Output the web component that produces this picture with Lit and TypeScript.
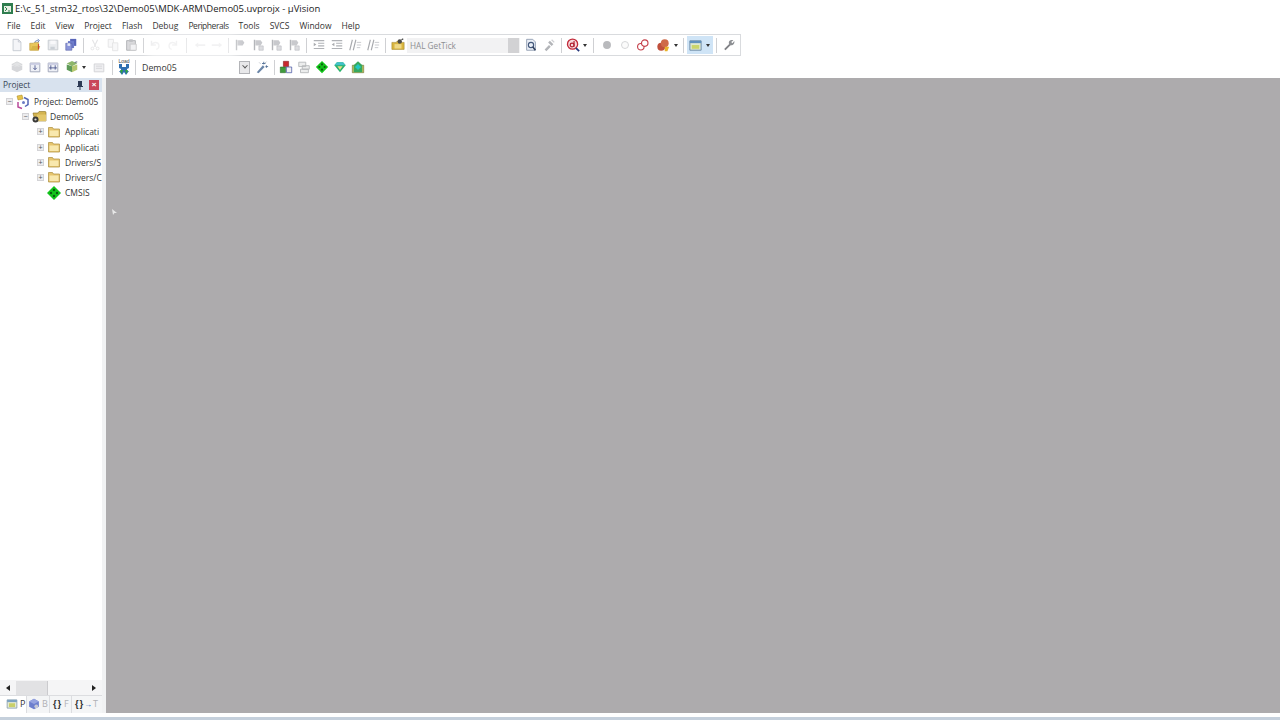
import { LitElement, html, css, svg, TemplateResult } from "lit";
import { customElement } from "lit/decorators.js";

const s = (body: TemplateResult, cls = "") =>
  html`<svg class="ic ${cls}" width="16" height="16" viewBox="0 0 16 16">${body}</svg>`;

const G = "#c9c9cc";
const GD = "#aeb0b4";
const icons: Record<string, TemplateResult> = {
  newf: s(svg`<path d="M3.500 1.500h6l3 3v10h-9z" fill="#f4f5f8" stroke="#c4c8d0"/><path d="M9.500 1.500v3h3" fill="none" stroke="#c4c8d0"/>`),
  open: s(svg`<path d="M2 6h4l1-1h5v9H2z" fill="#e8c65a" stroke="#bd9a3a" stroke-width=".7"/><path d="M3 14l2-5h9l-2 5z" fill="#d8b548"/><path d="M11 1l2 2-2 2M8 5c0-2 2-2 4-2" fill="none" stroke="#5a78b8"/><path d="M12 7v6" stroke="#c9492f" stroke-width="1.4"/>`),
  save: s(svg`<path d="M2.500 2.500h11v11h-11z" fill="#e9ebee" stroke="#c5c9ce"/><path d="M5 3h6v4H5z" fill="#f8f8fa"/><path d="M5 10h5v3H5z" fill="#cbd0d6"/>`),
  saveall: s(svg`<path d="M7 1h7v8H7z" fill="#5865b8"/><path d="M4.500 3.500h7v8h-7z" fill="#6f7dcb"/><path d="M2 6h7v8H2z" fill="#8b96da" stroke="#4c579f" stroke-width=".6"/><path d="M4 6h3v3H4z" fill="#e6e8f6"/>`),
  cut: s(svg`<path d="M5 2l4 8M11 2l-4 8" stroke="${G}" stroke-width="1.2"/><circle cx="5" cy="12" r="1.6" fill="none" stroke="${G}"/><circle cx="11" cy="12" r="1.6" fill="none" stroke="${G}"/>`),
  copy: s(svg`<path d="M2.500 1.500h6v9h-6z" fill="#f2f2f4" stroke="${G}"/><path d="M7.500 5.500h6v9h-6z" fill="#f2f2f4" stroke="${G}"/>`),
  paste: s(svg`<path d="M3 3h10v11H3z" fill="#d9d9dc" stroke="${GD}"/><path d="M6 1.500h4v3H6z" fill="#bfc0c4"/><path d="M7 7h7v7H7z" fill="#f1f1f3" stroke="${G}"/>`),
  undo: s(svg`<path d="M4 3v5h5M4.500 8C6 4 12 4 12.500 8.500c.2 2-1 4-3 4.500" fill="none" stroke="${G}" stroke-width="1.6"/>`),
  redo: s(svg`<path d="M12 3v5H7M11.500 8C10 4 4 4 3.500 8.500c-.2 2 1 4 3 4.500" fill="none" stroke="${G}" stroke-width="1.6"/>`),
  back: s(svg`<path d="M2 8l4-3v2h8v2H6v2z" fill="${G}"/>`),
  fwd: s(svg`<path d="M14 8l-4-3v2H2v2h8v2z" fill="${G}"/>`),
  flag: s(svg`<path d="M4 2v12" stroke="#b4b6ba" stroke-width="1.6"/><path d="M5 2.500h6l2 3-2 3H5z" fill="#c8c9cd"/>`),
  flagb: s(svg`<path d="M4 2v12" stroke="#b4b6ba" stroke-width="1.6"/><path d="M5 2.500h6l2 3-2 3H5z" fill="#c8c9cd"/><path d="M9 9h5v5H9z" fill="#dcdde0" stroke="#b5b6ba" stroke-width=".6"/>`),
  indent: s(svg`<path d="M2 3h12M7 6h7M7 9h7M2 12h12" stroke="#b0b2b6" stroke-width="1.200"/><path d="M2 5.500l3 2-3 2z" fill="#a8aaae"/>`),
  outdent: s(svg`<path d="M2 3h12M7 6h7M7 9h7M2 12h12" stroke="#b0b2b6" stroke-width="1.200"/><path d="M5 5.500l-3 2 3 2z" fill="#a8aaae"/>`),
  cmt: s(svg`<path d="M5 2L2 14M9 2L6 14" stroke="#a8aaae" stroke-width="1.300"/><path d="M10 5h5M10 8h5M10 11h4" stroke="#c2c4c8"/>`),
  find: s(svg`<path d="M1 5h5l1-1.500h4l1 1.500h3v8H1z" fill="#d9b53f" stroke="#9c7f26" stroke-width=".6"/><path d="M4 7h8v5H4z" fill="#efd987"/><circle cx="10" cy="4" r="2.500" fill="#4a4a48"/><path d="M12 2l2-1" stroke="#444" stroke-width="1.300"/>`),
  doc: s(svg`<path d="M3 1.500h7l3 3V14H3z" fill="#e9eef6" stroke="#8f9bb0"/><circle cx="8" cy="8" r="3" fill="none" stroke="#44597c" stroke-width="1.300"/><path d="M10 10l3 4" stroke="#33435f" stroke-width="1.800"/>`),
  tools2: s(svg`<path d="M3 13l5-5 2 2-5 5zM9 3l4 4-2 2-4-4z" fill="#b3b5b9"/><path d="M11 2l3 3" stroke="#cfd0d3" stroke-width="1.500"/>`),
  debug: s(svg`<circle cx="7.500" cy="7" r="5.800" fill="#f6d9dc" stroke="#c22a3a" stroke-width="1.500"/><circle cx="7" cy="8" r="2.200" fill="none" stroke="#b01c2e" stroke-width="1.300"/><path d="M9.200 3.500V10" stroke="#b01c2e" stroke-width="1.300"/><path d="M11.500 11.500l3.500 3.500" stroke="#26367a" stroke-width="2"/>`),
  bp: s(svg`<circle cx="8" cy="8" r="4.500" fill="#b9babd"/>`),
  bpo: s(svg`<circle cx="8" cy="8" r="4" fill="#fbfbfb" stroke="#d0d1d4"/>`),
  bpx: s(svg`<circle cx="5.500" cy="10" r="3.700" fill="#fff" stroke="#c5404a" stroke-width="1.300"/><circle cx="10" cy="5.800" r="3.700" fill="#fff" stroke="#c5404a" stroke-width="1.300"/>`),
  run: s(svg`<circle cx="6" cy="10" r="4.500" fill="#c0503c"/><circle cx="10" cy="6" r="4.500" fill="#cf6a48"/><path d="M10 10l5 0-2 5h-3z" fill="#e8b32c"/>`),
  win: s(svg`<path d="M2 3h12v10H2z" fill="#dfe9d0" stroke="#6d8aa8"/><path d="M2 3h12v2.500H2z" fill="#5f90bd"/><path d="M4 7.500h8v4H4z" fill="#c9d46a"/>`),
  wrench: s(svg`<path d="M2.500 12.500l6-6 1.500 1.500-6 6z" fill="#7f8185"/><path d="M8 6.500c-1-3 2-5 5-4l-2.500 2 1.500 1.500 2-2.500c1 3-2 6-5 4.500z" fill="#8d8f93"/>`),
  t1: s(svg`<path d="M8 2l6 3-6 3-6-3z" fill="#e2e3e5" stroke="#c8c9cc" stroke-width=".6"/><path d="M2 6v5l6 3V8zM14 6v5l-6 3V8z" fill="#d6d7da"/>`),
  t2: s(svg`<path d="M2.500 3.500h11v10h-11z" fill="#eef0f6" stroke="#9aa0b5"/><path d="M2.500 3.500h11v2h-11z" fill="#c8cbe0"/><path d="M8 6v5M6 9l2 2 2-2" stroke="#4a558c" fill="none"/>`),
  t3: s(svg`<path d="M2.500 3.500h11v10h-11z" fill="#eef0f6" stroke="#9aa0b5"/><path d="M2.500 3.500h11v2h-11z" fill="#c8cbe0"/><path d="M5.500 6v5M10.500 6v5M3.500 9h9" stroke="#4a558c" fill="none"/>`),
  t4: s(svg`<path d="M8 1l6 3-6 3-6-3z" fill="#8db66a"/><path d="M2 5v6l6 3V7z" fill="#5e9a58"/><path d="M14 5v6l-6 3V7z" fill="#b5c66f"/><path d="M11 3l3-1" stroke="#70808a" stroke-width="1.300"/>`),
  t5: s(svg`<path d="M2.500 4.500h11v9h-11z" fill="#f0f0f2" stroke="#d0d1d5"/><path d="M4.500 7h7M4.500 9.500h7" stroke="#d3d4d8"/>`),
  load: html`<svg class="ld" width="16" height="18" viewBox="0 0 16 18"><text x="8" y="5" text-anchor="middle" font-size="5" font-family="Liberation Sans" fill="#444">Load</text><path d="M3 6h3v3h4V6h3v4l-2 1v2h2l-3 4-2-3-2 3-3-4h2v-2L3 10z" fill="#2f6fb0"/><path d="M4 12h3l-1.500 4zM9 12h3l-1.500 4z" fill="#2fa33f"/></svg>`,
  wand: s(svg`<path d="M2 14L9 6l2 2-7 7z" fill="#6b86a8"/><path d="M10 2v3M8 4h4M13 6v3M12 7.500h3" stroke="#4f6d94"/><path d="M5 3l1 1M13 2l-1 1" stroke="#909aa6"/>`),
  cube: s(svg`<path d="M5 1.500h6v6H5z" fill="#c8282e" stroke="#7b1316" stroke-width=".6"/><path d="M1.500 8h6v6.500h-6z" fill="#3f9c3d" stroke="#1d5f1c" stroke-width=".6"/><path d="M8.500 8h6v6.500h-6z" fill="#f0f0f2" stroke="#3f4fa0" stroke-width=".8"/>`),
  mgr: s(svg`<path d="M2 2.500h8v5H2zM6 6.500h8v4H6zM4 10.500h9v4H4z" fill="#eceded" stroke="#b5b7b9"/>`),
  gem: s(svg`<path d="M8 1l7 7-7 7-7-7z" fill="#12c41a"/><circle cx="8" cy="5" r="1.200" fill="#0b5c10"/><circle cx="8" cy="11" r="1.200" fill="#0b5c10"/><circle cx="5" cy="8" r="1.200" fill="#0b5c10"/><circle cx="11" cy="8" r="1.200" fill="#0b5c10"/>`),
  gemb: s(svg`<path d="M1.500 6l3-3.500h7l3 3.500L8 14z" fill="#28b26b"/><path d="M1.500 6L4.500 2.500h7L14.500 6z" fill="#42c0c8"/><path d="M5 7h6L8 11.500z" fill="#e6dc8a"/>`),
  pack: s(svg`<path d="M1.500 6h13v8.500h-13z" fill="#e3c65a" stroke="#5b6f36" stroke-width=".7"/><path d="M8 1.500L13 6v8H3V6z" fill="#37a85e"/><path d="M8 4.500l3.500 3.500L8 11.500 4.500 8z" fill="#22c7c2"/>`),
  proj: s(svg`<path d="M2 2l5-1 1 4-5 1z" fill="#e5c24a" stroke="#a9871f" stroke-width=".5"/><path d="M9 3.500l4 2v5l-3 2" fill="none" stroke="#5265b5" stroke-width="1.500"/><path d="M3 8v5l4 1.500" fill="none" stroke="#b94b9b" stroke-width="1.500"/><circle cx="8.500" cy="8.500" r="1.500" fill="#6b7cc4"/>`),
  target: s(svg`<path d="M2 4h5l1-1.500h6a1 1 0 0 1 1 1V12H4z" fill="#d3b451" stroke="#8a7022" stroke-width=".6"/><path d="M6 5.500h9V12H6z" fill="#e3c76b"/><circle cx="4.500" cy="10.500" r="3" fill="#3a3a38"/><circle cx="4.500" cy="10.500" r="1.100" fill="#d8d8d4"/>`),
  folder: s(svg`<path d="M2.500 3.500h4l1 1.500h6v8h-11z" fill="#e6c56e" stroke="#b4974a" stroke-width=".8"/><path d="M3.500 6.500h9V12h-9z" fill="#f8e8ae"/>`),
  tabP: s(svg`<path d="M1.500 2.500h13v11h-13z" fill="#e6ead0" stroke="#7d95ab"/><path d="M1.500 2.500h13v3h-13z" fill="#7ca2c2"/><path d="M4 7h8v5H4z" fill="#c9d06a"/>`),
  tabB: s(svg`<path d="M8 1l6.500 3.500v7L8 15l-6.500-3.500v-7z" fill="#6d7fce"/><path d="M8 1l6.500 3.500L8 8 1.500 4.500z" fill="#96a3e0"/><circle cx="11" cy="11" r="2.500" fill="#c7c9d4"/>`),
};

type Item = { i?: string; w?: number; sep?: boolean; caret?: boolean; dim?: boolean };
const sp = (w = 6): Item => ({ sep: true, w });
const ic = (i: string, w = 18, dim = false): Item => ({ i, w, dim });

const row1: Item[] = [
  ic("newf"), ic("open"), ic("save"), ic("saveall"), sp(),
  ic("cut", 18, true), ic("copy", 18, true), ic("paste"), sp(),
  ic("undo", 18, true), ic("redo", 18, true), sp(9),
  ic("back", 17, true), ic("fwd", 17, true), sp(6),
  ic("flag"), ic("flagb"), ic("flagb"), ic("flagb"), sp(7),
  ic("indent"), ic("outdent"), ic("cmt"), ic("cmt"), sp(7),
  ic("find"),
];
const row1b: Item[] = [
  ic("doc"), ic("tools2"), sp(6),
  ic("debug", 17), { caret: true, w: 8 }, sp(9),
  ic("bp"), ic("bpo"), ic("bpx"), ic("run", 21), { caret: true, w: 6 }, sp(8),
];
const row2a: Item[] = [
  ic("t1"), ic("t2"), ic("t3"), ic("t4", 19), { caret: true, w: 6 }, ic("t5", 24), sp(3),
  ic("load", 20), sp(3),
];
const row2b: Item[] = [ic("wand"), sp(6), ic("cube"), ic("mgr"), ic("gem"), ic("gemb"), ic("pack")];

const tree = [
  { l: 0, box: "−", i: "proj", t: "Project: Demo05" },
  { l: 1, box: "−", i: "target", t: "Demo05" },
  { l: 2, box: "+", i: "folder", t: "Applicati" },
  { l: 2, box: "+", i: "folder", t: "Applicati" },
  { l: 2, box: "+", i: "folder", t: "Drivers/S" },
  { l: 2, box: "+", i: "folder", t: "Drivers/C" },
  { l: 2, box: "", i: "gem", t: "CMSIS" },
];

@customElement("app-root")
export class AppRoot extends LitElement {
  static styles = css`
    :host { display: flex; flex-direction: column; width: 1280px; height: 720px; overflow: hidden; background: #fff;
      font-family: "Open Sans", "Noto Sans", "Liberation Sans", sans-serif; color: #2c2c2c; position: relative; }
    svg { display: block; }
    .title { height: 17px; display: flex; align-items: center; padding-left: 2px; gap: 2px; font-size: 9.5px; color: #222; flex: none; }
    .menu { height: 17px; flex: none; display: flex; align-items: center; padding-left: 7px; font-size: 8.5px; color: #333; }
    .menu span { margin-right: 10px; }
    .menu span.narrow { letter-spacing: -.45px; }
    .bar { display: flex; align-items: center; flex: none; }
    .r1 { width: 732px; padding-left: 8px; height: 20px; border: 1px solid #d9dbde; border-left: 0; }
    .r2 { height: 22px; padding-left: 8px; }
    .it { flex: none; display: flex; align-items: center; justify-content: center; height: 18px; }
    .it .ic { width: 14px; height: 14px; }
    .dim svg { opacity: .5; }
    .sepv { flex: none; display: flex; justify-content: center; }
    .sepv::before { content: ""; width: 1px; height: 15px; background: #cfd0d3; }
    .caret { flex: none; height: 18px; display: flex; align-items: center; justify-content: center; }
    .caret::before { content: ""; border: 2.5px solid transparent; border-top: 3px solid #333; border-bottom: 0; }
    .combo { flex: none; display: flex; align-items: center; justify-content: space-between; width: 113px; height: 15px; margin: 0 2px 0 0; background: #f2f2f3; color: #8d8e92; font-size: 8.2px; box-sizing: border-box; padding-left: 3px; }
    .combo i { width: 11px; height: 15px; background: #d2d2d4; display: block; margin-right: 1px; }
    .high { flex: none; display: flex; align-items: center; width: 26px; height: 18px; padding-left: 1px; background: #cfe4f6; box-sizing: border-box; }
    .high .ic { width: 15px; height: 15px; }
    .target { flex: none; width: 109px; height: 18px; margin: 0 3px 0 4px; display: flex; align-items: center; justify-content: space-between; font-size: 8.8px; color: #333; padding-left: 1px; box-sizing: border-box; }
    .target span { padding-top: 2px; }
    .target i { width: 11px; height: 13px; background: #e8e8ea; border: 1px solid #b2b3b7; box-sizing: border-box; display: flex; align-items: center; justify-content: center; }
    .target i::before { content: ""; width: 3px; height: 3px; border-right: 1px solid #555; border-bottom: 1px solid #555; transform: rotate(45deg) translate(-1px,-1px); }
    .main { flex: 1; display: flex; min-height: 0; }
    .panel { width: 102px; flex: none; display: flex; flex-direction: column; background: #fff; }
    .head { height: 14px; flex: none; display: flex; align-items: center; background: #d8e2ee; font-size: 8.4px; color: #3a4656; padding-left: 3px; }
    .head span { flex: 1; padding-bottom: 2px; }
    .pin { width: 8px; height: 9px; margin-right: 5px; }
    .close { width: 10px; height: 10px; margin-right: 3px; background: #c9475b; color: #fff; font: 700 8px/10px "Liberation Sans", sans-serif; text-align: center; }
    .tree { flex: 1; padding-top: 2px; overflow: hidden; }
    .row { height: 15.17px; display: flex; align-items: center; font-size: 8.5px; white-space: nowrap; color: #333; }
    .l0 { padding-left: 6px; font-size: 8.3px; } .l1 { padding-left: 22px; } .l2 { padding-left: 37px; }
    .box { width: 7px; height: 7px; flex: none; background: #ececee; border: 1px solid #d3d3d6; box-sizing: border-box; color: #555; font: 7px/5px "Liberation Sans", sans-serif; text-align: center; margin-right: 2px; }
    .box.none { visibility: hidden; }
    .row .ic { flex: none; margin-right: 3px; }
    .sb { height: 15px; flex: none; display: flex; align-items: center; background: #f5f5f6; }
    .sb .a { width: 16px; display: flex; justify-content: center; flex: none; }
    .al { border: 3.5px solid transparent; border-right: 4px solid #222; border-left: 0; }
    .ar { border: 3.5px solid transparent; border-left: 4px solid #222; border-right: 0; }
    .thumb { width: 31px; height: 14px; background: #e2e2e4; border-right: 1px solid #cbcbce; flex: none; }
    .sb .fill { flex: 1; }
    .tabs { height: 17px; flex: none; display: flex; align-items: center; background: #f4f5f6; font-size: 9px; color: #b0b1b5; border-top: 1px solid #dcdde0; }
    .tab { display: flex; align-items: center; height: 100%; gap: 2px; box-sizing: border-box; flex: none; border-right: 1px solid #dcdde0; padding-bottom: 2px; }
    .tab .ic { width: 12px; height: 12px; }
    .t-p { width: 27px; padding-left: 6px; background: #fff; color: #333; }
    .t-b { width: 23px; padding-left: 1px; }
    .t-f { width: 22px; padding-left: 3px; }
    .t-t { width: 30px; padding-left: 3px; border-right: 0; }
    .br { font: 700 9.5px "Liberation Sans", sans-serif; color: #333; letter-spacing: .8px; }
    .arrow { color: #2c6fc0; margin: 0 -1px 0 -2px; font-size: 8px; }
    .split { width: 4px; flex: none; background: #f1f2f3; }
    .client { flex: 1; background: #adabad; }
    .foot { height: 4px; flex: none; background: #fff; }
    .status { height: 3px; flex: none; background: #c5d0dc; }
    .cursor { position: absolute; left: 112px; top: 209px; width: 5px; height: 6px; }
    .ghost { position: absolute; left: 148px; top: 34px; width: 88px; height: 26px; background: rgba(255,255,255,.55); filter: blur(5px); }
  `;

  private renderItems(items: Item[]) {
    return items.map((it) => {
      if (it.sep) return html`<div class="sepv" style="width:${it.w}px"></div>`;
      if (it.caret) return html`<div class="caret" style="width:${it.w}px"></div>`;
      return html`<div class="it ${it.dim ? "dim" : ""}" style="width:${it.w}px">${icons[it.i!]}</div>`;
    });
  }

  render() {
    const menu = ["File", "Edit", "View", "Project", "Flash", "Debug", "Peripherals", "Tools", "SVCS", "Window", "Help"];
    return html`
      <div class="title">
        <svg width="11" height="11" viewBox="0 0 11 11"><path d="M0 0h11v11H0z" fill="#2f7d4f"/><path d="M2 3h7v6H2z" fill="#e8efe4"/><path d="M3 4l2 2-2 2M6 8h2" stroke="#2f7d4f" fill="none"/></svg>
        <span>E:\\c_51_stm32_rtos\\32\\Demo05\\MDK-ARM\\Demo05.uvprojx - µVision</span>
      </div>
      <div class="menu">${menu.map((m) => html`<span class="${m === "Peripherals" ? "narrow" : ""}">${m}</span>`)}</div>
      <div class="bar r1">
        ${this.renderItems(row1)}
        <div class="combo"><span>HAL GetTick</span><i></i></div>
        ${this.renderItems(row1b)}
        <div class="high">${icons.win}<div class="caret" style="width:9px"></div></div>
        ${this.renderItems([sp(7), ic("wrench")])}
      </div>
      <div class="bar r2">
        ${this.renderItems(row2a)}
        <div class="target"><span>Demo05</span><i></i></div>
        ${this.renderItems(row2b)}
      </div>
      <div class="main">
        <div class="panel">
          <div class="head"><span>Project</span>
            <svg class="pin" viewBox="0 0 8 9"><path d="M2 0h4v5h1v1H4.500v3h-1V6H1V5h1z" fill="#2d3a55"/></svg>
            <div class="close">×</div>
          </div>
          <div class="tree">
            ${tree.map((r) => html`<div class="row l${r.l}">
              <div class="box ${r.box ? "" : "none"}">${r.box}</div>
              ${icons[r.i]}<span>${r.t}</span>
            </div>`)}
          </div>
          <div class="sb"><div class="a"><div class="al"></div></div><div class="thumb"></div><div class="fill"></div><div class="a"><div class="ar"></div></div></div>
          <div class="tabs">
            <div class="tab t-p">${icons.tabP}<span>P</span></div>
            <div class="tab t-b">${icons.tabB}<span>B</span></div>
            <div class="tab t-f"><span class="br">{}</span><span>F</span></div>
            <div class="tab t-t"><span class="br">{}</span><span class="arrow">→</span><span>T</span></div>
          </div>
        </div>
        <div class="split"></div>
        <div class="client"></div>
      </div>
      <div class="foot"></div>
      <div class="status"></div>
      <div class="ghost"></div>
      <svg class="cursor" viewBox="0 0 5 6"><path d="M0 0l5 4H2.500L1 6z" fill="#e8e8e8"/></svg>
    `;
  }
}
